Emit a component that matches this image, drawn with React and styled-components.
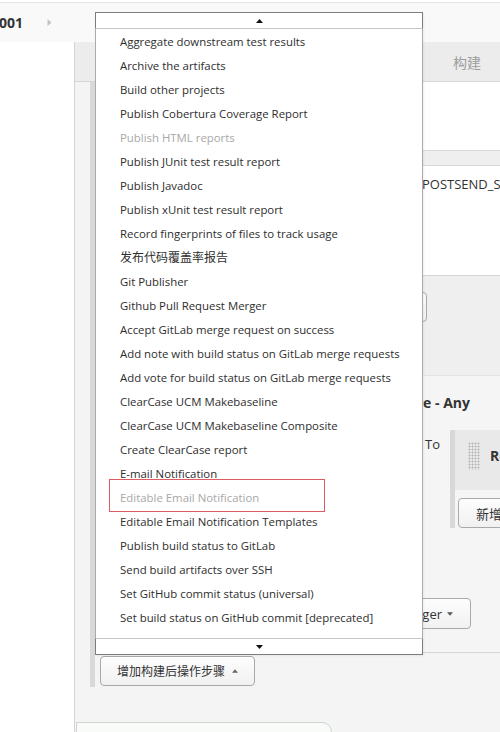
import React from 'react';
import styled, { createGlobalStyle } from 'styled-components';

const GlobalStyle = createGlobalStyle`
  html, body {
    margin: 0;
    padding: 0;
    background: #fff;
    overflow: hidden;
  }
  body {
    font-family: 'Open Sans', 'Noto Sans CJK SC', sans-serif;
    color: #333;
  }
`;

const Page = styled.div`
  position: relative;
  width: 500px;
  height: 732px;
  overflow: hidden;
  display: flex;
  flex-direction: column;
`;

const TopStrip = styled.div`
  height: 2px;
  flex-shrink: 0;
  border-bottom: 1px solid #e3e3e3;
`;

const Breadcrumbs = styled.div`
  height: 39px;
  flex-shrink: 0;
  background: #f9f9f9;
  display: flex;
  align-items: center;
  gap: 24px;
`;

const Crumb = styled.span`
  margin-left: -1px;
  font-size: 14px;
  font-weight: 700;
  color: #333;
`;

const Body = styled.div`
  flex: 1;
  display: flex;
  min-height: 0;
`;

const Sidebar = styled.div`
  width: 74px;
  flex-shrink: 0;
  background: #fff;
  border-right: 1px solid #d4d4d4;
`;

const Main = styled.div`
  flex: 1;
  min-width: 0;
  display: flex;
  flex-direction: column;
  background: #f4f4f4;
  overflow: hidden;
`;

const TabBar = styled.div`
  height: 39px;
  flex-shrink: 0;
  display: flex;
  align-items: center;
  padding-left: 20px;
  background: #ececec;
  border-bottom: 1px solid #d6d6d6;
  white-space: nowrap;
  overflow: hidden;
`;

const Tab = styled.div`
  flex: 0 0 ${({ w }) => w}px;
  min-width: 0;
  overflow: hidden;
  padding-left: 18px;
  box-sizing: border-box;
  font-size: 14px;
  color: #9d9d9d;
`;

const Content = styled.div`
  padding-left: 15px;
`;

const Column = styled.div`
  display: flex;
  flex-direction: column;
  border-left: 5px solid #d9d9d9;
`;

const WhiteSection = styled.div`
  height: ${({ h }) => h}px;
  box-sizing: border-box;
  padding-top: ${({ pt }) => pt || 0}px;
  background: #fff;
`;

const Band = styled.div`
  height: 14px;
  background: #efefef;
  border-top: 1px solid #d8d8d8;
  border-bottom: 1px solid #d8d8d8;
`;

const FieldRow = styled.div`
  display: grid;
  grid-template-columns: 327px 1fr;
  line-height: 18px;
  font-size: 13px;
  white-space: nowrap;
  overflow: hidden;
`;

const GraySection = styled.div`
  background: #f2f2f2;
  border-top: 1px solid #d6d6d6;
  border-bottom: 1px solid #d6d6d6;
`;

const ButtonRow = styled.div`
  display: flex;
  justify-content: flex-end;
  padding: ${({ pad }) => pad};
  background: ${({ bg }) => bg || 'transparent'};
`;

const TriggerBlock = styled.div`
  border-top: 1px solid #e4e4e4;
  background: #f5f5f5;
  padding-top: 17px;
`;

const TriggerHeading = styled.div`
  padding-right: 30px;
  text-align: right;
  line-height: 20px;
  font-size: 14px;
  font-weight: 700;
  color: #333;
`;

const SendToRow = styled.div`
  display: flex;
  margin-top: 17px;
  overflow: hidden;
`;

const FieldLabel = styled.div`
  flex: 0 0 355px;
  box-sizing: border-box;
  padding: 5px 10px 0 0;
  text-align: right;
  line-height: 18px;
  font-size: 13px;
  color: #333;
`;

const Repeatable = styled.div`
  flex: 0 0 200px;
  display: flex;
  flex-direction: column;
  align-items: flex-start;
  border-left: 5px solid #d8d8d8;
`;

const RepeatedChunk = styled.div`
  align-self: stretch;
  height: 60px;
  box-sizing: border-box;
  padding: 12px 0 0 13px;
  display: flex;
  gap: 10px;
  background: #e9e9e9;
`;

const DragHandle = styled.div`
  width: 12px;
  height: 28px;
  background-image: radial-gradient(circle, #b4b4b4 0.9px, transparent 1.1px);
  background-size: 3px 3px;
`;

const ChunkTitle = styled.div`
  line-height: 28px;
  font-size: 14px;
  font-weight: 700;
  white-space: nowrap;
`;

const Button = styled.button`
  height: ${({ h }) => h || 30}px;
  box-sizing: border-box;
  display: inline-flex;
  align-items: center;
  gap: ${({ gap }) => gap || 7}px;
  margin: ${({ m }) => m || 0};
  padding: 0 ${({ px }) => px || 16}px;
  border: 1px solid #a9a9a9;
  border-radius: 4px;
  background: linear-gradient(#fdfdfd, #f1f1f1);
  font-family: 'Open Sans', 'Noto Sans CJK SC', sans-serif;
  font-size: ${({ fs }) => fs || 12}px;
  color: #333;
  white-space: nowrap;
`;

const ColumnFooter = styled.div`
  padding: 3px 0 1px 5px;
  display: flex;
`;

const SaveBar = styled.div`
  width: 254px;
  height: 40px;
  flex-shrink: 0;
  margin: 35px 0 0 1px;
  background: #f9fbf8;
  border: 1px solid #cfd5cf;
  border-radius: 0 10px 0 0;
`;

const Dropdown = styled.div`
  position: absolute;
  left: 95px;
  top: 12px;
  width: 328px;
  height: 643px;
  box-sizing: border-box;
  display: flex;
  flex-direction: column;
  background: #fff;
  border: 1px solid #ababab;
  box-shadow: 1px 1px 2px rgba(0, 0, 0, 0.06);
`;

const ScrollArrow = styled.div`
  height: 17px;
  flex-shrink: 0;
  box-sizing: border-box;
  margin: ${({ top }) => (top ? '-1px -1px 0' : '0 -1px -1px')};
  display: flex;
  align-items: center;
  justify-content: center;
  border: 1px solid #7d7d7d;
  border-${({ top }) => (top ? 'bottom' : 'top')}-color: #c6c6c6;
  background: #fff;
`;

const List = styled.ul`
  flex: 1;
  margin: 0;
  padding: 1px 0 0;
  list-style: none;
  overflow: hidden;
`;

const Item = styled.li`
  height: 24px;
  padding-left: 24px;
  line-height: 24px;
  font-size: ${({ cjk }) => (cjk ? 12 : 11.4)}px;
  color: ${({ disabled }) => (disabled ? '#a8a8a8' : '#2e2e2e')};
  white-space: nowrap;
`;

const Highlight = styled.div`
  position: absolute;
  left: 109px;
  top: 479px;
  width: 216px;
  height: 33px;
  box-sizing: border-box;
  border: 1px solid #de5b63;
  pointer-events: none;
`;

const Caret = ({ up, color = '#111', w = 7, h = 4 }) => (
  <svg width={w} height={h} viewBox="0 0 7 4">
    <path d={up ? 'M0 4 L3.5 0 L7 4 Z' : 'M0 0 L7 0 L3.5 4 Z'} fill={color} />
  </svg>
);

const Chevron = () => (
  <svg width="5" height="7" viewBox="0 0 5 7">
    <path d="M0.5 0 L4.5 3.5 L0.5 7 Z" fill="#c4c4c4" />
  </svg>
);

const steps = [
  ['Aggregate downstream test results'],
  ['Archive the artifacts'],
  ['Build other projects'],
  ['Publish Cobertura Coverage Report'],
  ['Publish HTML reports', 'disabled'],
  ['Publish JUnit test result report'],
  ['Publish Javadoc'],
  ['Publish xUnit test result report'],
  ['Record fingerprints of files to track usage'],
  ['发布代码覆盖率报告', 'cjk'],
  ['Git Publisher'],
  ['Github Pull Request Merger'],
  ['Accept GitLab merge request on success'],
  ['Add note with build status on GitLab merge requests'],
  ['Add vote for build status on GitLab merge requests'],
  ['ClearCase UCM Makebaseline'],
  ['ClearCase UCM Makebaseline Composite'],
  ['Create ClearCase report'],
  ['E-mail Notification'],
  ['Editable Email Notification', 'disabled'],
  ['Editable Email Notification Templates'],
  ['Publish build status to GitLab'],
  ['Send build artifacts over SSH'],
  ['Set GitHub commit status (universal)'],
  ['Set build status on GitHub commit [deprecated]'],
  ['Trigger parameterized build on other projects'],
];

export default function App() {
  return (
    <Page>
      <GlobalStyle />
      <TopStrip />
      <Breadcrumbs>
        <Crumb>001</Crumb>
        <Chevron />
      </Breadcrumbs>

      <Body>
        <Sidebar />
        <Main>
          <TabBar>
            <Tab w={60}>General</Tab>
            <Tab w={90}>源码管理</Tab>
            <Tab w={100}>构建触发器</Tab>
            <Tab w={90}>构建环境</Tab>
            <Tab w={70}>构建</Tab>
            <Tab w={100}>构建后操作</Tab>
          </TabBar>

          <Content>
            <Column>
              <WhiteSection h={68} />
              <Band />
              <WhiteSection h={109} pt={9}>
                <FieldRow>
                  <span>Command</span>
                  <span>POSTSEND_SCRIPT=/data/scripts/post.sh</span>
                </FieldRow>
              </WhiteSection>

              <GraySection>
                <ButtonRow pad="16px 73px 53px 0" bg="#efefef">
                  <Button>
                    增加构建步骤 <Caret color="#555" w={6} />
                  </Button>
                </ButtonRow>

                <TriggerBlock>
                  <TriggerHeading>Failure - Any</TriggerHeading>
                  <SendToRow>
                    <FieldLabel>Send To</FieldLabel>
                    <Repeatable>
                      <RepeatedChunk>
                        <DragHandle />
                        <ChunkTitle>Recipient List</ChunkTitle>
                      </RepeatedChunk>
                      <Button m="8px 0 0 3px" fs={13} px={17}>
                        新增
                      </Button>
                    </Repeatable>
                  </SendToRow>
                  <ButtonRow pad="70px 29px 23px 0">
                    <Button h={31} fs={13} px={17} gap={5}>
                      Add Trigger <Caret color="#555" w={6} />
                    </Button>
                  </ButtonRow>
                </TriggerBlock>
              </GraySection>

              <ColumnFooter>
                <Button>
                  增加构建后操作步骤 <Caret up color="#666" w={6} />
                </Button>
              </ColumnFooter>
            </Column>
          </Content>

          <SaveBar />
        </Main>
      </Body>

      <Dropdown>
        <ScrollArrow top>
          <Caret up />
        </ScrollArrow>
        <List>
          {steps.map(([label, flag]) => (
            <Item key={label} disabled={flag === 'disabled'} cjk={flag === 'cjk'}>
              {label}
            </Item>
          ))}
        </List>
        <ScrollArrow>
          <Caret />
        </ScrollArrow>
      </Dropdown>

      <Highlight />
    </Page>
  );
}
